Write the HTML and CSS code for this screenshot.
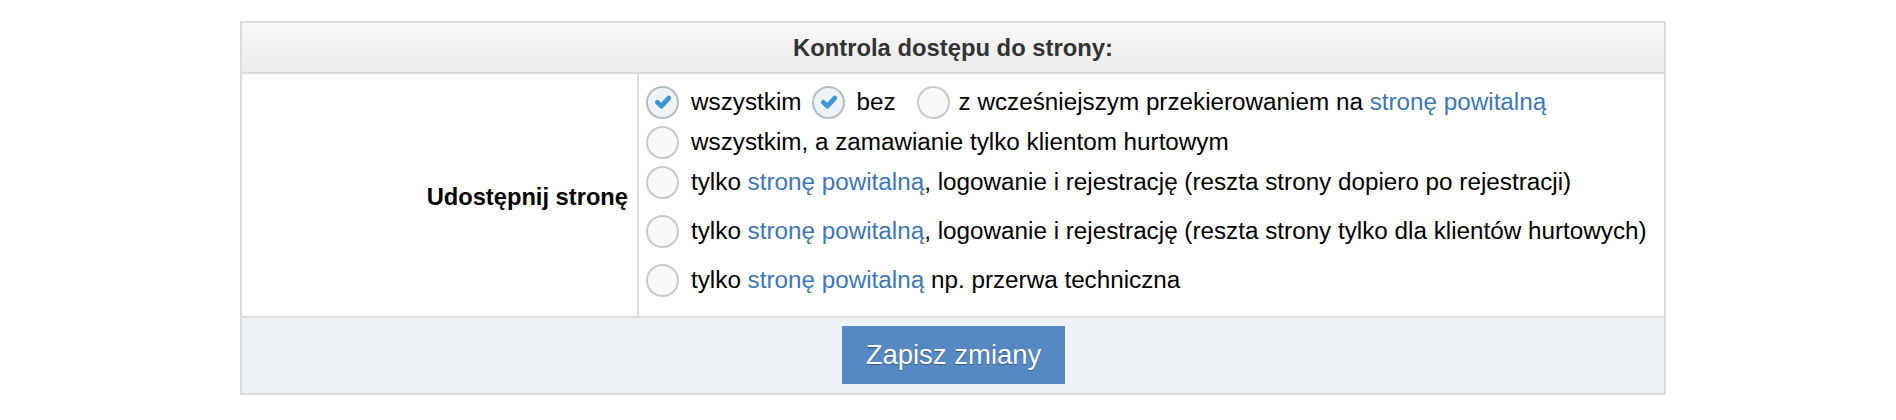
FILE: index.html
```html
<!DOCTYPE html>
<html lang="pl">
<head>
<meta charset="utf-8">
<title>Kontrola dostępu do strony</title>
<link rel="stylesheet" href="styles.css">
</head>
<body>
<form class="panel">
  <div class="panel-head">Kontrola dostępu do strony:</div>
  <div class="panel-body">
    <div class="label-cell">Udostępnij stronę</div>
    <div class="options-cell">
      <div class="opt">
        <span class="radio checked"><svg viewBox="0 0 16 16"><path d="M4.2 8.2 L7 10.8 L11.8 5.4" /></svg></span>
        <span class="txt">wszystkim</span>
        <span class="radio checked r-mid"><svg viewBox="0 0 16 16"><path d="M4.2 8.2 L7 10.8 L11.8 5.4" /></svg></span>
        <span class="txt">bez</span>
        <span class="radio r-far"></span>
        <span class="txt">z wcześniejszym przekierowaniem na <a href="#">stronę powitalną</a></span>
      </div>
      <div class="opt">
        <span class="radio"></span>
        <span class="txt">wszystkim, a zamawianie tylko klientom hurtowym</span>
      </div>
      <div class="opt">
        <span class="radio"></span>
        <span class="txt">tylko <a href="#">stronę powitalną</a>, logowanie i rejestrację (reszta strony dopiero po rejestracji)</span>
      </div>
      <div class="opt spaced">
        <span class="radio"></span>
        <span class="txt">tylko <a href="#">stronę powitalną</a>, logowanie i rejestrację (reszta strony tylko dla klientów hurtowych)</span>
      </div>
      <div class="opt spaced">
        <span class="radio"></span>
        <span class="txt">tylko <a href="#">stronę powitalną</a> np. przerwa techniczna</span>
      </div>
    </div>
  </div>
  <div class="panel-foot">
    <button type="button" class="btn">Zapisz zmiany</button>
  </div>
</form>
</body>
</html>
```

FILE: styles.css
```css
* { box-sizing: border-box; }

body {
  margin: 0;
  background: #ffffff;
  font-family: "Liberation Sans", Arial, Helvetica, sans-serif;
  color: #000;
}

.panel {
  margin: 21px 0 0 240px;
  width: 1426px;
  border: 2px solid #dcdcdc;
}

.panel-head {
  height: 51px;
  border-bottom: 2px solid #dcdcdc;
  background: linear-gradient(to bottom, #f9f9f9, #ececec);
  display: flex;
  align-items: center;
  justify-content: center;
  font-weight: bold;
  font-size: 23.8px;
  color: #333;
  padding-top: 1px;
}

.panel-body {
  display: grid;
  grid-template-columns: 397px 1fr;
}

.label-cell {
  border-right: 2px solid #dcdcdc;
  display: flex;
  align-items: center;
  justify-content: flex-end;
  padding-right: 9px;
  padding-top: 4px;
  font-weight: bold;
  font-size: 23.7px;
}

.options-cell {
  padding: 8px 8px 16px 7px;
  font-size: 24.25px;
}

.opt {
  height: 40px;
  display: flex;
  align-items: center;
}

.opt.spaced { margin-top: 9px; }

.radio {
  width: 33px;
  height: 33px;
  flex: none;
  border-radius: 50%;
  border: 2px solid #cacaca;
  background: #f9f9f9;
  display: flex;
  align-items: center;
  justify-content: center;
  margin-right: 12px;
}

.radio.checked {
  border-color: #b3bec9;
  background: #eef3f8;
}

.radio svg {
  width: 24px;
  height: 24px;
}

.radio svg path {
  fill: none;
  stroke: #3d97d4;
  stroke-width: 3.2;
  stroke-linecap: round;
  stroke-linejoin: round;
}

.radio.r-mid { margin-left: 11px; margin-right: 11px; }
.radio.r-far { margin-left: 21px; margin-right: 9px; }

.txt { white-space: nowrap; }

.txt a {
  color: #3c78b7;
  text-decoration: none;
}

.panel-foot {
  border-top: 2px solid #dcdcdc;
  background: #eef2f7;
  height: 77px;
  display: flex;
  justify-content: center;
  padding-top: 8px;
}

.btn {
  width: 223px;
  height: 58px;
  border: none;
  background: #5589c4;
  color: #fff;
  font-family: "Liberation Sans", Arial, Helvetica, sans-serif;
  font-size: 27.5px;
  text-shadow: 0 1px 1px rgba(0, 0, 0, 0.35);
  padding: 0;
  margin-left: 1px;
  cursor: pointer;
}
```
